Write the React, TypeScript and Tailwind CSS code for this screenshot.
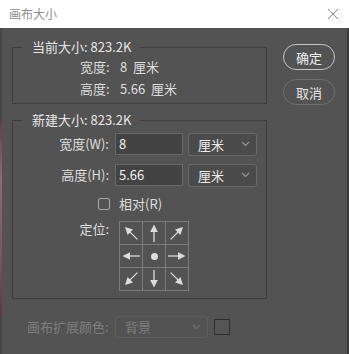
import React from "react";

const FONT = "font-['Noto_Sans_CJK_SC','Noto_Sans',sans-serif]";

// direction in degrees, 0 = up
const CELLS: (number | null)[] = [-45, 0, 45, -90, null, 90, -135, 180, 135];

function Arrow({ angle }: { angle: number }) {
  return (
    <svg width="22" height="22" viewBox="0 0 22 22">
      <g transform={`rotate(${angle} 11 11)`} fill="#dcdcdc" stroke="#dcdcdc">
        <line x1="11" y1="9" x2="11" y2="20" strokeWidth="1.3" />
        <polygon points="11,2.5 7.2,10 14.8,10" stroke="none" />
      </g>
    </svg>
  );
}

function Chevron({ color = "#9a9a9a" }: { color?: string }) {
  return (
    <svg width="9" height="6" viewBox="0 0 9 6">
      <polyline points="1,1 4.5,4.5 8,1" fill="none" stroke={color} strokeWidth="1.1" />
    </svg>
  );
}

function UnitSelect() {
  return (
    <div className="flex h-[23px] w-[69px] items-center justify-between rounded-[3px] border border-[#686868] bg-[#4b4b4b] pl-[9px] pr-[6px] text-[13px] leading-none text-[#ececec]">
      <span>厘米</span>
      <Chevron />
    </div>
  );
}

export default function App() {
  return (
    <div className={`flex h-[354px] w-[349px] flex-col bg-[#535353] ${FONT}`}>
      {/* title bar */}
      <div className="flex h-[28px] shrink-0 items-center justify-between bg-white pl-[9px] pr-[10px]">
        <span className="text-[12px] leading-none text-[#8c8c8c]">画布大小</span>
        <svg width="12" height="12" viewBox="0 0 12 12">
          <path d="M1 1 L11 11 M11 1 L1 11" stroke="#8a8a8a" strokeWidth="1" />
        </svg>
      </div>

      <div className="flex flex-1">
        <div className="w-[2px] bg-[linear-gradient(to_bottom,#474747_0px,#474747_88px,#5e3f47_92px,#8a6b7a_150px,#7a5562_230px,#5e3a43_285px,#484848_290px)]" />

        <div className="flex flex-1 pt-[10px] pl-[10px]">
          <div className="flex w-[255px] flex-col">
            {/* current size */}
            <fieldset className="h-[66px] border border-[#3d3d3d] px-0 pb-[3px]">
              <legend className="ml-[10px] px-[9px] text-[13px] leading-[18px] text-[#e6e6e6]">
                当前大小: 823.2K
              </legend>
              <div className="flex flex-col pl-[67px] text-[13px] text-[#dedede]">
                <div className="flex h-[22px] items-center">
                  <span className="w-[40px]">宽度:</span>
                  <span>8&nbsp;&nbsp;厘米</span>
                </div>
                <div className="flex h-[22px] items-center">
                  <span className="w-[40px]">高度:</span>
                  <span>5.66&nbsp;&nbsp;厘米</span>
                </div>
              </div>
            </fieldset>

            {/* new size */}
            <fieldset className="mt-[7px] h-[188px] border border-[#3d3d3d] px-0">
              <legend className="ml-[10px] px-[9px] text-[13px] leading-[18px] text-[#e6e6e6]">
                新建大小: 823.2K
              </legend>
              <div className="flex flex-col pt-[4px] text-[13px] text-[#dedede]">
                <div className="flex h-[22px] items-center">
                  <span className="w-[96px] text-right">宽度(W):</span>
                  <div className="ml-[6px] flex h-[22px] w-[68px] items-center border border-[#686868] bg-[#434343] pl-[3px] text-[13px] text-[#f2f2f2]">
                    8
                  </div>
                  <div className="ml-[5px]">
                    <UnitSelect />
                  </div>
                </div>
                <div className="mt-[9px] flex h-[22px] items-center">
                  <span className="w-[96px] text-right">高度(H):</span>
                  <div className="ml-[6px] flex h-[22px] w-[68px] items-center border border-[#686868] bg-[#434343] pl-[3px] text-[13px] text-[#f2f2f2]">
                    5.66
                  </div>
                  <div className="ml-[5px]">
                    <UnitSelect />
                  </div>
                </div>
                <div className="mt-[8px] flex h-[19px] items-center pl-[85px]">
                  <div className="h-[12px] w-[12px] rounded-[2px] border border-[#a8a8a8]" />
                  <span className="ml-[9px]">相对(R)</span>
                </div>
                <div className="mt-[8px] flex items-start">
                  <span className="mt-[1px] w-[96px] text-right leading-[14px]">定位:</span>
                  <div className="ml-[10px] grid grid-cols-3 gap-px bg-[#7c7c7c] p-px">
                    {CELLS.map((a, i) => (
                      <div key={i} className="flex h-[22px] w-[22px] items-center justify-center bg-[#535353]">
                        {a === null ? (
                          <div className="h-[7px] w-[7px] rounded-full bg-[#dcdcdc]" />
                        ) : (
                          <Arrow angle={a} />
                        )}
                      </div>
                    ))}
                  </div>
                </div>
              </div>
            </fieldset>

            {/* canvas extension colour */}
            <div className="mt-[17px] flex items-center text-[13px] text-[#7e7e7e]">
              <span className="ml-[15px] w-[86px]">画布扩展颜色:</span>
              <div className="ml-[2px] flex h-[22px] w-[93px] items-center justify-between rounded-[3px] border border-[#5f5f5f] pl-[9px] pr-[6px]">
                <span>背景</span>
                <Chevron color="#6e6e6e" />
              </div>
              <div className="ml-[6px] h-[16px] w-[16px] border border-[#2e2e2e] bg-[#555555]" />
            </div>
          </div>

          {/* buttons */}
          <div className="ml-[16px] mt-[6px] flex flex-col gap-[9px]">
            <button className="h-[26px] w-[52px] rounded-full border-[1.5px] border-[#c4c4c4] text-[13px] leading-none text-[#efefef]">
              确定
            </button>
            <button className="h-[26px] w-[52px] rounded-full border-[1.5px] border-[#707070] text-[13px] leading-none text-[#e6e6e6]">
              取消
            </button>
          </div>
        </div>

        <div className="w-[2px] bg-[#3a3a3a]" />
      </div>
    </div>
  );
}
